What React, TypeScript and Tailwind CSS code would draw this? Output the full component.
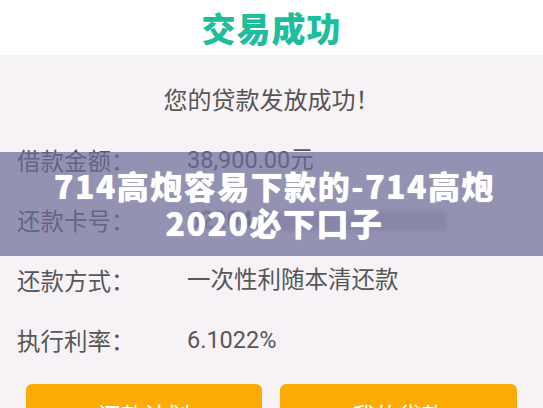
import React from 'react';

const rows = [
  { label: '借款金额：', value: '38,900.00元' },
  { label: '还款卡号：', value: '' },
  { label: '还款方式：', value: '一次性利随本清还款' },
  { label: '执行利率：', value: '6.1022%' },
];

function CardNumber() {
  // masked card number, blurred out
  return (
    <div className="relative flex items-center">
      <span className="blur-[1px]">62204</span>
      <span className="ml-1 h-[20px] w-[190px] rounded-sm bg-[#c9c6cf] blur-[2px]" />
    </div>
  );
}

export default function App() {
  return (
    <div className="relative w-[543px] h-[408px] overflow-hidden bg-[#f6f2f5] font-['Noto_Sans_CJK_SC',sans-serif]">
      <div className="h-[55px] bg-white flex items-center justify-center">
        <span className="text-[34px] leading-none font-black tracking-[1px] text-[#1dbd9d]">交易成功</span>
      </div>

      <div className="h-[76px] pt-[12px] flex items-center justify-center text-[24px] text-[#555]">
        您的贷款发放成功！
      </div>

      <div className="px-[17px]">
        {rows.map((row) => (
          <div key={row.label} className="h-[60px] flex items-center text-[23.5px] text-[#575757]">
            <span className="w-[170px] shrink-0">{row.label}</span>
            <span className="font-['Roboto','Noto_Sans_CJK_SC',sans-serif]">
              {row.value || <CardNumber />}
            </span>
          </div>
        ))}
      </div>

      <div className="mt-[13px] px-[26px] flex gap-[18px]">
        <button className="w-[236px] h-[60px] rounded-[6px] bg-[#ffab07] text-white text-[23px] flex items-center justify-center">
          还款计划
        </button>
        <button className="w-[237px] h-[60px] rounded-[6px] bg-[#ffab07] text-white text-[23px] flex items-center justify-center">
          我的贷款
        </button>
      </div>

      <div className="absolute left-0 right-0 top-[152px] h-[104px] bg-[#6b6a97]/70 flex items-center justify-center">
        <p className="w-[480px] ml-[6px] text-center text-white font-black text-[32px] leading-[37px] tracking-[1.5px] [text-shadow:0_0_1px_rgba(255,255,255,0.9)]">
          714高炮容易下款的-714高炮2020必下口子
        </p>
      </div>
    </div>
  );
}
